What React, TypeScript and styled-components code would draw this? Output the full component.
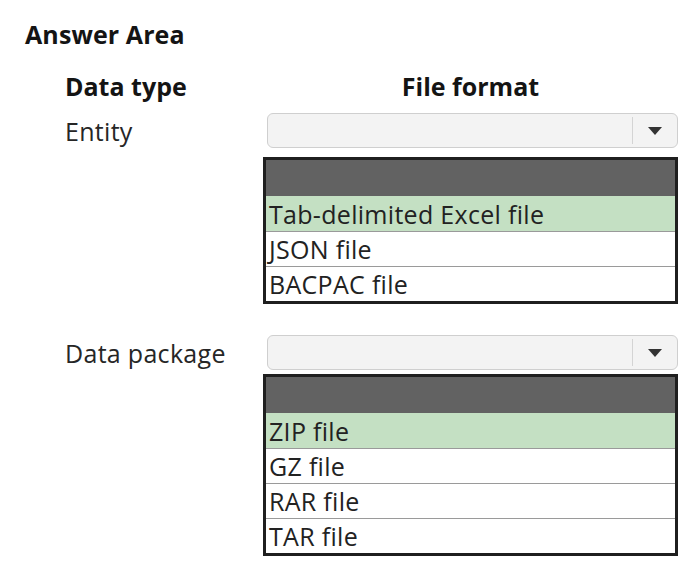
import React from "react";
import styled, { createGlobalStyle } from "styled-components";

const Global = createGlobalStyle`
  html, body { margin: 0; padding: 0; background: #ffffff; }
  body { font-family: "Open Sans", "Noto Sans", Arial, sans-serif; color: #1e1e1e; }
`;

const Page = styled.div`
  width: 699px;
  height: 576px;
  padding: 18px 0 0 25px;
  box-sizing: border-box;
`;

const Title = styled.div`
  font-weight: 700;
  font-size: 25px;
  line-height: 32px;
  height: 32px;
  letter-spacing: 0.1px;
  color: #141414;
`;

const Grid = styled.div`
  display: grid;
  grid-template-columns: 198px 415px;
  margin: 20px 0 0 40px;
`;

const HeadCell = styled.div<{ $center?: boolean }>`
  font-weight: 700;
  font-size: 25px;
  line-height: 32px;
  height: 32px;
  color: #141414;
  text-align: ${(p) => (p.$center ? "center" : "left")};
  margin-bottom: 11px;
`;

const Label = styled.div`
  font-size: 25px;
  letter-spacing: 0.3px;
  height: 35px;
  display: flex;
  align-items: center;
  color: #262626;
`;

const Control = styled.div<{ $gap: number; $after: number }>`
  display: flex;
  flex-direction: column;
  gap: ${(p) => p.$gap}px;
  margin-bottom: ${(p) => p.$after}px;
`;

const Combo = styled.div`
  margin-left: 4px;
  height: 35px;
  box-sizing: border-box;
  border: 1px solid #cfcfcf;
  border-radius: 6px;
  background: #f3f3f3;
  display: flex;
  justify-content: flex-end;
`;

const ArrowBox = styled.div`
  width: 44px;
  border-left: 1px solid #d4d4d4;
  margin: 3px 0;
  display: flex;
  align-items: center;
  justify-content: center;
`;

const List = styled.div`
  border: 3px solid #1f1f1f;
  background: #ffffff;
`;

const ListHead = styled.div`
  height: 36px;
  background: #626262;
`;

const Option = styled.div<{ $selected?: boolean }>`
  height: 35px;
  box-sizing: border-box;
  padding-left: 3px;
  display: flex;
  align-items: center;
  font-size: 25px;
  letter-spacing: 0.3px;
  color: #222222;
  background: ${(p) => (p.$selected ? "#c4e0c3" : "#ffffff")};
  & + & {
    border-top: 1px solid #9a9a9a;
  }
`;

const Arrow = () => (
  <svg width="16" height="10" viewBox="0 0 16 10">
    <path d="M1 1 L15 1 L8 9 Z" fill="#333333" />
  </svg>
);

const rows = [
  {
    label: "Entity",
    options: ["Tab-delimited Excel file", "JSON file", "BACPAC file"],
    gap: 9,
    after: 31,
  },
  {
    label: "Data package",
    options: ["ZIP file", "GZ file", "RAR file", "TAR file"],
    gap: 4,
    after: 0,
  },
];

export default function App() {
  return (
    <Page>
      <Global />
      <Title>Answer Area</Title>
      <Grid>
        <HeadCell>Data type</HeadCell>
        <HeadCell $center>File format</HeadCell>
        {rows.map((r) => (
          <React.Fragment key={r.label}>
            <Label>{r.label}</Label>
            <Control $gap={r.gap} $after={r.after}>
              <Combo>
                <ArrowBox>
                  <Arrow />
                </ArrowBox>
              </Combo>
              <List>
                <ListHead />
                {r.options.map((o, i) => (
                  <Option key={o} $selected={i === 0}>
                    {o}
                  </Option>
                ))}
              </List>
            </Control>
          </React.Fragment>
        ))}
      </Grid>
    </Page>
  );
}
